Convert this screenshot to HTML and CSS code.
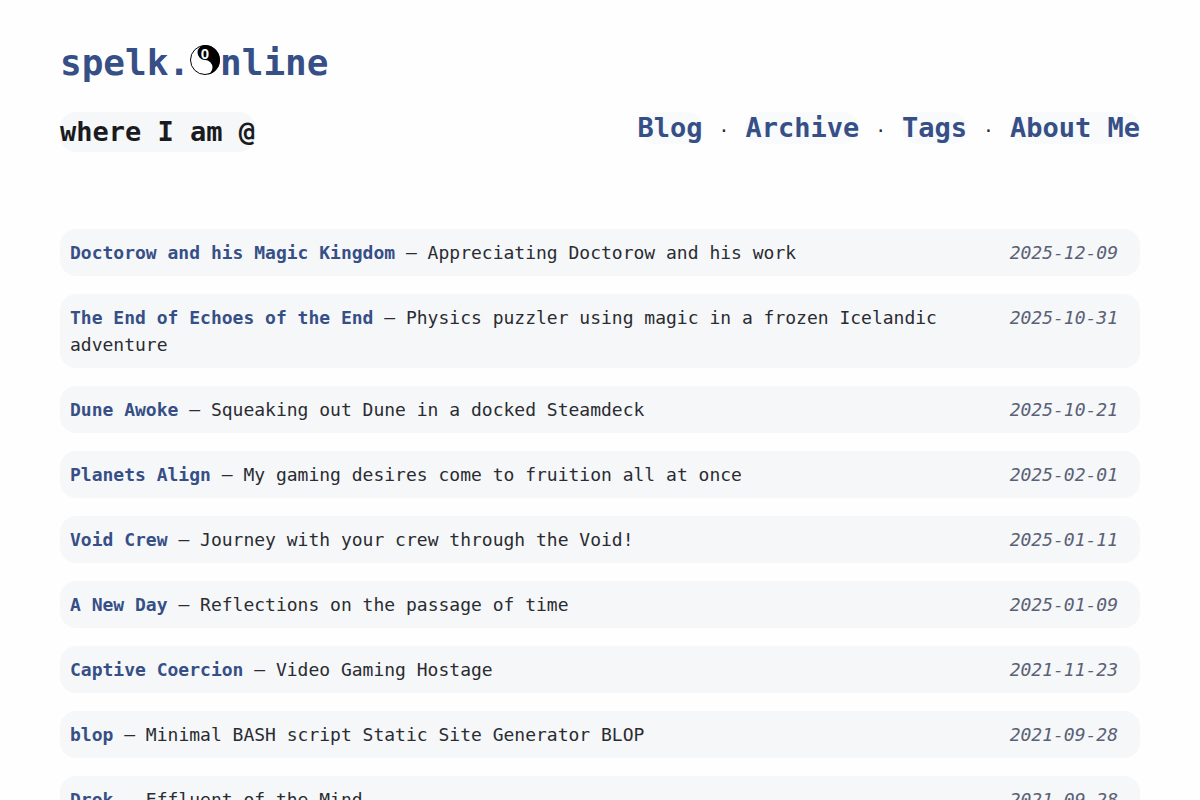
FILE: index.html
```html
<!DOCTYPE html>
<html lang="en">
<head>
  <meta charset="UTF-8">
  <meta name="viewport" content="width=device-width, initial-scale=1.0">
  <title>spelk.online</title>
  <link rel="stylesheet" href="styles.css">
</head>
<body>
  <header>
    <h1><a href="#">spelk.<svg class="logo" viewBox="0 0 30 30" role="img" aria-label="o">
      <circle cx="15" cy="15" r="14.5" fill="#fff" stroke="#000" stroke-width="1"/>
      <path d="M15 0A15 15 0 0 1 15 30A7.5 7.5 0 0 0 15 15A7.5 7.5 0 0 1 15 0Z" fill="#000"/>
      <text x="15" y="14" text-anchor="middle" class="logo-zero">0</text>
    </svg>nline</a></h1>
    <div class="bar">
      <h2>where I am @</h2>
      <nav>
        <a href="#">Blog</a>
        <span>·</span>
        <a href="#">Archive</a>
        <span>·</span>
        <a href="#">Tags</a>
        <span>·</span>
        <a href="#">About Me</a>
      </nav>
    </div>
  </header>

  <main>
    <ul class="posts">
      <li><p><a href="#">Doctorow and his Magic Kingdom</a> – Appreciating Doctorow and his work</p><time>2025-12-09</time></li>
      <li><p><a href="#">The End of Echoes of the End</a> – Physics puzzler using magic in a frozen Icelandic adventure</p><time>2025-10-31</time></li>
      <li><p><a href="#">Dune Awoke</a> – Squeaking out Dune in a docked Steamdeck</p><time>2025-10-21</time></li>
      <li><p><a href="#">Planets Align</a> – My gaming desires come to fruition all at once</p><time>2025-02-01</time></li>
      <li><p><a href="#">Void Crew</a> – Journey with your crew through the Void!</p><time>2025-01-11</time></li>
      <li><p><a href="#">A New Day</a> – Reflections on the passage of time</p><time>2025-01-09</time></li>
      <li><p><a href="#">Captive Coercion</a> – Video Gaming Hostage</p><time>2021-11-23</time></li>
      <li><p><a href="#">blop</a> – Minimal BASH script Static Site Generator BLOP</p><time>2021-09-28</time></li>
      <li><p><a href="#">Drok</a> – Effluent of the Mind</p><time>2021-09-28</time></li>
    </ul>
  </main>
</body>
</html>
```
FILE: styles.css
```css
* {
  box-sizing: border-box;
}
body {
  margin: 0;
  padding: 36px 60px;
  background: #fefefe;
  color: #2a2c31;
  font-family: "DejaVu Sans Mono", monospace;
  font-size: 18px;
  line-height: 27px;
}
a {
  color: #364f86;
  font-weight: bold;
  text-decoration: none;
}
a:hover {
  text-decoration: underline;
}
h1 {
  margin: 0;
  font-size: 36px;
  line-height: 54px;
}
.logo {
  width: 30px;
  height: 30px;
}
.logo-zero {
  fill: #fff;
  font-family: "Liberation Sans", sans-serif;
  font-size: 15px;
  font-weight: bold;
}
.bar {
  display: flex;
  justify-content: space-between;
  align-items: flex-start;
  margin-top: 22px;
}
h2 {
  margin: 0;
  border-radius: 16px;
  background: #f5f7f9;
  color: #1a1b20;
  font-size: 27px;
  line-height: 40px;
}
nav {
  display: flex;
  align-items: baseline;
  gap: 16px;
}
nav a {
  border-radius: 16px;
  background: #f8fafc;
  font-size: 27px;
  line-height: 32px;
}
.posts {
  list-style: none;
  margin: 77px 0 0;
  padding: 0;
}
.posts li {
  display: flex;
  justify-content: space-between;
  gap: 36px;
  margin-bottom: 18px;
  padding: 10px 22px 10px 10px;
  border-radius: 16px;
  background: #f5f7f9;
}
.posts p {
  margin: 0;
}
.posts time {
  flex-shrink: 0;
  color: #5a6175;
  font-style: italic;
}
```
